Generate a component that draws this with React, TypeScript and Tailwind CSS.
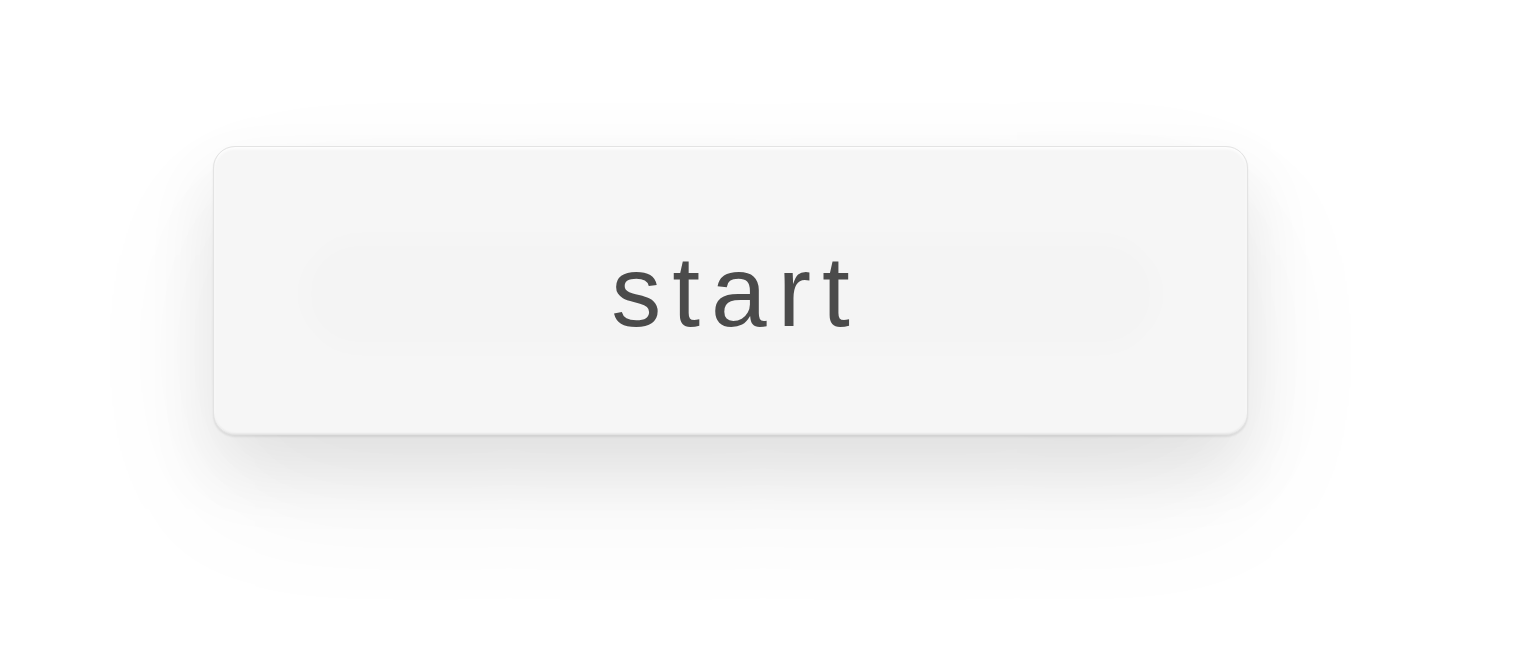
import React from 'react';

const App: React.FC = () => {
  return (
    <div className="min-h-[647px] w-full bg-white pl-[213px] pt-[146px] font-['Liberation_Sans',Arial,sans-serif]">
      <button
        type="button"
        className="relative flex h-[289px] w-[1035px] items-center justify-center overflow-hidden rounded-[22px] border border-[#e3e3e3] bg-[#f6f6f6] shadow-[inset_0_2px_3px_rgba(255,255,255,0.9),inset_0_-1px_2px_rgba(0,0,0,0.06),0_2px_2px_rgba(0,0,0,0.08),0_36px_70px_rgba(0,0,0,0.09),0_60px_150px_rgba(0,0,0,0.05)]"
      >
        {/* faint blurred glow behind the label */}
        <div
          aria-hidden
          className="pointer-events-none absolute left-[90px] right-[90px] top-[92px] h-[110px] rounded-full bg-black/[0.006] blur-[10px]"
        />
        <span className="relative pl-[11px] text-[100px] leading-none tracking-[11px] text-[#4b4b4b]">
          start
        </span>
      </button>
    </div>
  );
};

export default App;
